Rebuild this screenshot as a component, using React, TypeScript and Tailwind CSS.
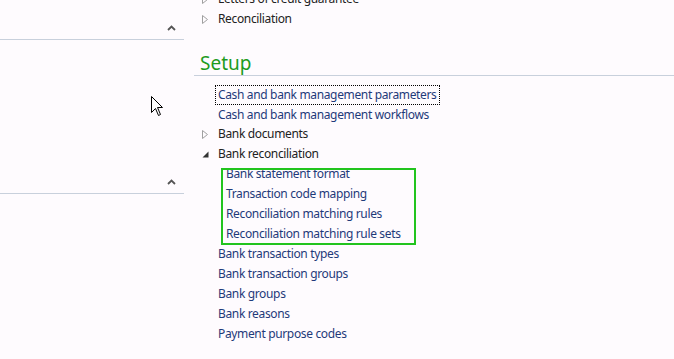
const Collapsed = () => (
  <svg width="6" height="9" viewBox="0 0 6 9" className="shrink-0">
    <path d="M0.5 0.5 L5.5 4.5 L0.5 8.5 Z" fill="none" stroke="#a0a0a0" strokeWidth="1" />
  </svg>
);

const Expanded = () => (
  <svg width="7" height="7" viewBox="0 0 7 7" className="shrink-0">
    <path d="M6.5 0.5 L6.5 6.5 L0.5 6.5 Z" fill="#333" />
  </svg>
);

const Chevron = () => (
  <svg width="9" height="6" viewBox="0 0 9 6">
    <path d="M1 5 L4.5 1.5 L8 5" fill="none" stroke="#555" strokeWidth="1.8" />
  </svg>
);

const Row = ({ children, icon, h = "h-5" }: { children: React.ReactNode; icon?: React.ReactNode; h?: string }) => (
  <div className={`flex items-center ${h}`}>
    <div className="w-6 flex justify-start pl-2">{icon}</div>
    {children}
  </div>
);

const Link = ({ label }: { label: string }) => (
  <Row>
    <span className="text-[#1f3a7a]">{label}</span>
  </Row>
);

export default function App() {
  return (
    <div
      className="relative w-[674px] h-[359px] overflow-hidden bg-[#fefbfe] flex text-[12px] tracking-[-0.35px]"
      style={{ fontFamily: '"Noto Sans", "Open Sans", sans-serif' }}
    >
      <div className="w-[184px] shrink-0">
        <div className="h-10 border-b border-[#c8d0dc] flex items-end justify-end pr-2 pb-2">
          <Chevron />
        </div>
        <div className="h-[154px] border-b border-[#c8d0dc] flex items-end justify-end pr-2 pb-2">
          <Chevron />
        </div>
      </div>

      <div className="ml-[10px] flex-1 -mt-[11px]">
        <Row icon={<Collapsed />}>
          <span className="text-[#222]">Letters of credit guarantee</span>
        </Row>
        <Row icon={<Collapsed />}>
          <span className="text-[#222]">Reconciliation</span>
        </Row>

        <div className="mt-[20px] h-[27px] border-b border-[#c8d0dc] pl-[6px] flex items-end">
          <span className="text-[19px] leading-none text-[#1d9b1d] pb-[2px] tracking-normal">Setup</span>
        </div>

        <div className="pt-[9px]">
          <Row>
            <span className="text-[#1f3a7a] border border-dotted border-black -ml-[3px] px-[2px] leading-[18px]">
              Cash and bank management parameters
            </span>
          </Row>
          <Row h="h-[19px]">
            <span className="text-[#1f3a7a]">Cash and bank management workflows</span>
          </Row>
          <Row icon={<Collapsed />}>
            <span className="text-[#222]">Bank documents</span>
          </Row>
          <Row icon={<Expanded />}>
            <span className="text-[#222]">Bank reconciliation</span>
          </Row>
          <div className="pl-2">
            <Link label="Bank statement format" />
            <Link label="Transaction code mapping" />
            <Link label="Reconciliation matching rules" />
            <Link label="Reconciliation matching rule sets" />
          </div>
          <Link label="Bank transaction types" />
          <Link label="Bank transaction groups" />
          <Link label="Bank groups" />
          <Link label="Bank reasons" />
          <Link label="Payment purpose codes" />
        </div>
      </div>

      <div className="absolute left-[221px] top-[168px] w-[195px] h-[77px] border-2 border-[#22c41e]" />

      <svg className="absolute left-[151px] top-[96px]" width="13" height="21" viewBox="0 0 13 21">
        <path
          d="M0.5 0.5 L0.5 16.5 L4.5 12.5 L7.5 19.5 L9.5 18.5 L6.5 11.5 L11.5 11.5 Z"
          fill="#fff"
          stroke="#000"
          strokeWidth="1"
        />
      </svg>
    </div>
  );
}
